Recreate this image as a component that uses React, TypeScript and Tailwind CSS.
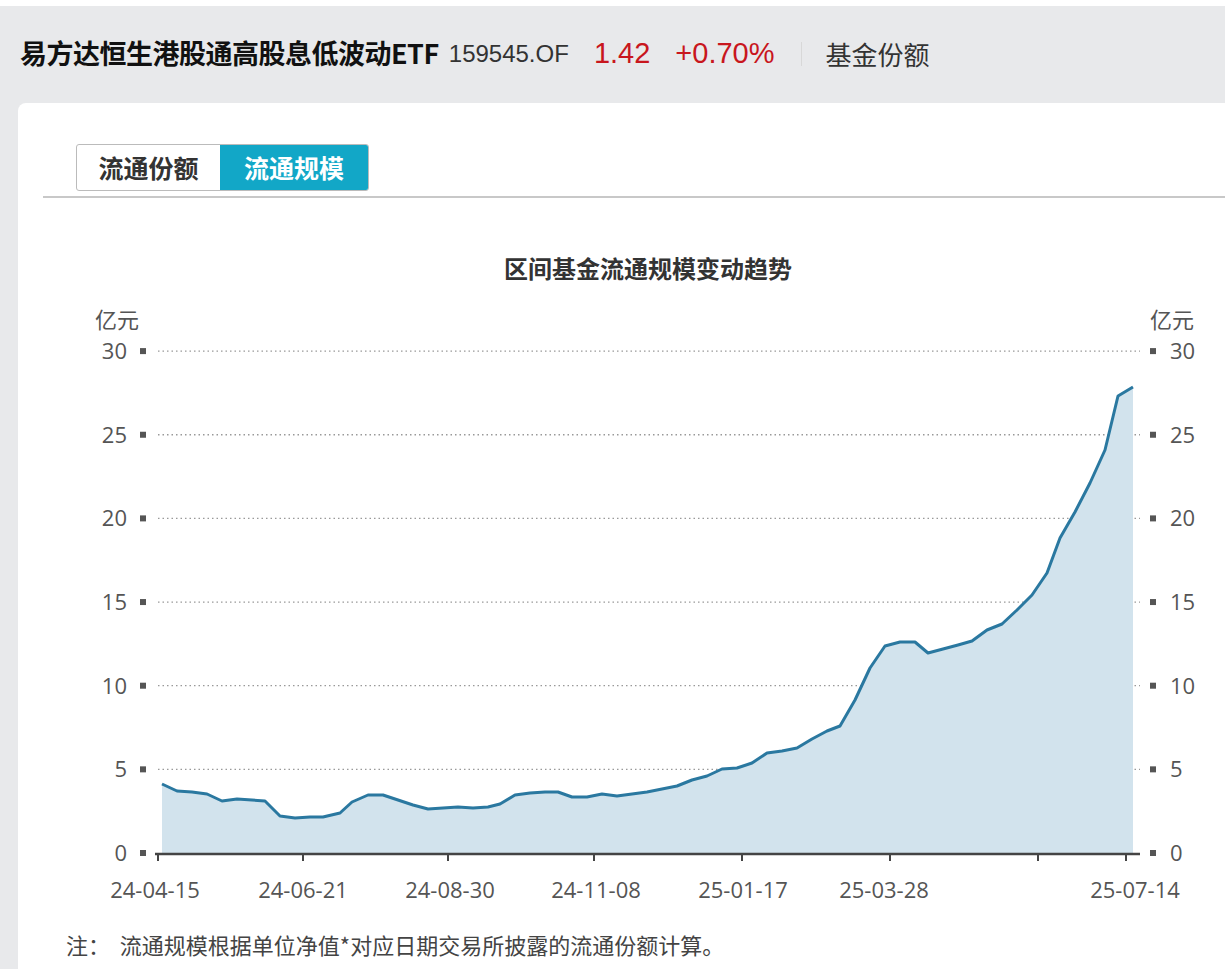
const pts: [number, number][] = [[162,786],[177,793],[192,794],[207,796],[222,803],[237,801],[252,802],[265,803],[280,818],[295,820],[310,819],[323,819],[340,815],[352,804],[368,797],[383,797],[398,802],[413,807],[428,811],[443,810],[458,809],[473,810],[488,809],[500,806],[515,797],[530,795],[545,794],[558,794],[572,799],[587,799],[602,796],[617,798],[632,796],[647,794],[662,791],[677,788],[692,782],[707,778],[722,771],[737,770],[752,765],[767,755],[782,753],[797,750],[812,741],[827,733],[840,728],[855,702],[870,670],[885,648],[900,644],[915,644],[928,655],[943,651],[958,647],[972,643],[987,632],[1002,626],[1017,612],[1032,597],[1047,575],[1060,540],[1075,514],[1090,485],[1105,452],[1118,398],[1133,389]];

const OX = 18, OY = 198;

export default function App() {
  const line = pts.map(([x, y], i) => `${i ? "L" : "M"}${x - OX},${y - OY}`).join(" ");
  const area = `${line} L${1133 - OX},${855 - OY} L${162 - OX},${855 - OY} Z`;
  const ys = [30, 25, 20, 15, 10, 5, 0];
  const yp = (v: number) => 855 - v * 16.73 - OY;
  const xl: [number, string][] = [[155,"24-04-15"],[303,"24-06-21"],[450,"24-08-30"],[596,"24-11-08"],[743,"25-01-17"],[884,"25-03-28"],[1135,"25-07-14"]];
  const ticks = [158, 303, 448, 594, 742, 890, 1038, 1126];
  return (
    <div className="w-[1225px] h-[969px] bg-[#e8e9eb] overflow-hidden" style={{ fontFamily: '"Noto Sans CJK SC", "Noto Sans", sans-serif' }}>
      <div className="h-[6px] bg-white" />
      <div className="flex items-center h-[97px] pl-[20px] pb-[2px]">
        <span className="text-[27px] font-bold text-[#111] tracking-[-0.5px]">易方达恒生港股通高股息低波动ETF</span>
        <span className="ml-[10px] text-[24px] text-[#333]" style={{ fontFamily: '"Liberation Sans", sans-serif' }}>159545.OF</span>
        <span className="ml-[25px] text-[29px] text-[#c8161d]" style={{ fontFamily: '"Liberation Sans", sans-serif' }}>1.42</span>
        <span className="ml-[25px] text-[29px] text-[#c8161d]" style={{ fontFamily: '"Liberation Sans", sans-serif' }}>+0.70%</span>
        <span className="ml-[26px] w-px h-[24px] bg-[#d8d8d8]" />
        <span className="ml-[24px] text-[26px] text-[#333]">基金份额</span>
      </div>
      <div className="ml-[18px] bg-white rounded-tl-[8px] h-[866px]">
        <div className="pt-[41px] ml-[25px] pl-[33px] h-[95px] border-b-2 border-[#c8c8c8]">
          <div className="flex h-[47px] w-[293px] rounded-[3px] overflow-hidden border border-[#bbb]">
            <div className="flex-1 flex items-center justify-center text-[25px] font-bold text-[#333]">流通份额</div>
            <div className="w-[148px] flex items-center justify-center text-[25px] font-bold text-white bg-[#12a7c7]">流通规模</div>
          </div>
        </div>
        <svg width="1207" height="771" className="block -mt-[2px]">
          <text x={648 - OX} y={280 - OY} textAnchor="middle" fontSize="24" fontWeight="700" fill="#333">区间基金流通规模变动趋势</text>
          <text x={95 - OX} y={330 - OY} fontSize="22" fill="#555">亿元</text>
          <text x={1150 - OX} y={330 - OY} fontSize="22" fill="#555">亿元</text>
          {ys.map(v => (
            <g key={v}>
              {v > 0 && <line x1={158 - OX} x2={1140 - OX} y1={yp(v)} y2={yp(v)} stroke="#999" strokeWidth="1.3" strokeDasharray="1.5 3" />}
              <text x={127 - OX} y={yp(v) + 8} textAnchor="end" fontSize="22" fill="#555" fontFamily="Open Sans, sans-serif">{v}</text>
              <rect x={140 - OX} y={yp(v) - 3} width="6" height="6" fill="#555" />
              <rect x={1150 - OX} y={yp(v) - 3} width="6" height="6" fill="#555" />
              <text x={1170 - OX} y={yp(v) + 8} fontSize="22" fill="#555" fontFamily="Open Sans, sans-serif">{v}</text>
            </g>
          ))}
          <path d={area} fill="#d2e3ed" />
          <path d={line} fill="none" stroke="#2a78a0" strokeWidth="3" strokeLinejoin="round" />
          <line x1={155 - OX} x2={1140 - OX} y1={856 - OY} y2={856 - OY} stroke="#444" strokeWidth="2.5" />
          {ticks.map(t => <line key={t} x1={t - OX} x2={t - OX} y1={856 - OY} y2={863 - OY} stroke="#444" strokeWidth="2" />)}
          {xl.map(([x, s]) => (
            <text key={s} x={x - OX} y={900 - OY} textAnchor="middle" fontSize="22" fill="#555" fontFamily="Open Sans, sans-serif">{s}</text>
          ))}
          <text x={66 - OX} y={956 - OY} fontSize="22" fill="#444" xmlSpace="preserve">注：  流通规模根据单位净值*对应日期交易所披露的流通份额计算。</text>
        </svg>
      </div>
    </div>
  );
}
